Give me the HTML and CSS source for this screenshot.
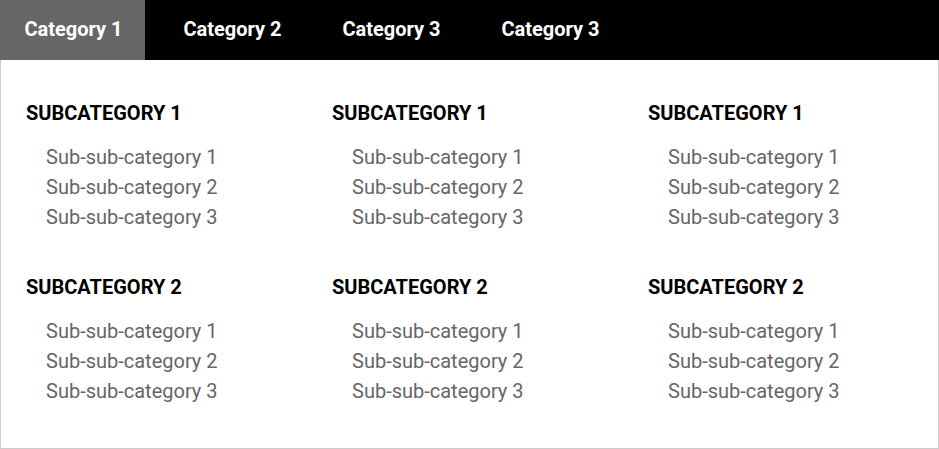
FILE: index.html
```html
<!DOCTYPE html>
<html>
<head>
<meta charset="utf-8">
<link rel="stylesheet" href="styles.css">
</head>
<body>
<nav class="tabs">
  <a class="tab active">Category 1</a>
  <a class="tab">Category 2</a>
  <a class="tab">Category 3</a>
  <a class="tab">Category 3</a>
</nav>
<div class="panel">
  <div class="col">
    <div class="group">
      <h3>SUBCATEGORY 1</h3>
      <ul><li>Sub-sub-category 1</li><li>Sub-sub-category 2</li><li>Sub-sub-category 3</li></ul>
    </div>
    <div class="group">
      <h3>SUBCATEGORY 2</h3>
      <ul><li>Sub-sub-category 1</li><li>Sub-sub-category 2</li><li>Sub-sub-category 3</li></ul>
    </div>
  </div>
  <div class="col">
    <div class="group">
      <h3>SUBCATEGORY 1</h3>
      <ul><li>Sub-sub-category 1</li><li>Sub-sub-category 2</li><li>Sub-sub-category 3</li></ul>
    </div>
    <div class="group">
      <h3>SUBCATEGORY 2</h3>
      <ul><li>Sub-sub-category 1</li><li>Sub-sub-category 2</li><li>Sub-sub-category 3</li></ul>
    </div>
  </div>
  <div class="col">
    <div class="group">
      <h3>SUBCATEGORY 1</h3>
      <ul><li>Sub-sub-category 1</li><li>Sub-sub-category 2</li><li>Sub-sub-category 3</li></ul>
    </div>
    <div class="group">
      <h3>SUBCATEGORY 2</h3>
      <ul><li>Sub-sub-category 1</li><li>Sub-sub-category 2</li><li>Sub-sub-category 3</li></ul>
    </div>
  </div>
</div>
</body>
</html>
```
FILE: styles.css
```css
* { box-sizing: border-box; }
html, body { margin: 0; padding: 0; background: #fff; }
body { font-family: Roboto, "Liberation Sans", sans-serif; width: 939px; height: 449px; overflow: hidden; }
.tabs {
  display: flex;
  gap: 14px;
  height: 60px;
  background: #000;
}
.tab {
  width: 145px;
  display: flex;
  align-items: center;
  justify-content: center;
  color: #fff;
  font-size: 20px;
  font-weight: 700;
  padding: 0 0 2px 2px;
}
.tab.active { background: #666; }
.panel {
  height: 389px;
  border: 1px solid #ccc;
  border-top: none;
  display: grid;
  grid-template-columns: 306px 316px 1fr;
  padding: 38px 0 0 25px;
}
.group { margin-bottom: 40px; }
h3 {
  margin: 0 0 14px;
  font-size: 20px;
  font-weight: 700;
  line-height: 30px;
  color: #000;
}
ul { list-style: none; margin: 0; padding: 0 0 0 20px; }
li { font-size: 20px; line-height: 30px; color: #666; }
```
